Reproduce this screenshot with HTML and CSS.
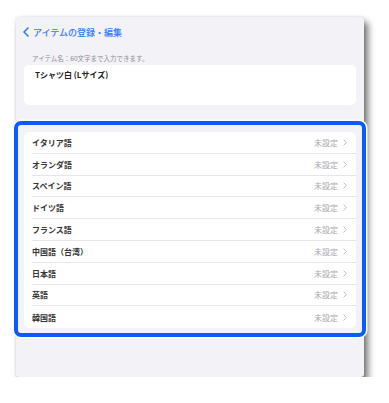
FILE: index.html
```html
<!DOCTYPE html>
<html lang="ja">
<head>
<meta charset="UTF-8">
<title>アイテムの登録・編集</title>
<link rel="stylesheet" href="styles.css">
</head>
<body>
	<div class="panel">
		<header class="nav">
			<svg class="back" width="6" height="10" viewBox="0 0 6 10"><polyline points="5,1 1,5 5,9" fill="none" stroke="#2f7cf6" stroke-width="1.6" stroke-linecap="round" stroke-linejoin="round"/></svg>
			<span>アイテムの登録・編集</span>
		</header>

		<p class="hint">アイテム名：60文字まで入力できます。</p>
		<div class="field">Tシャツ白 (Lサイズ)</div>

		<section class="langs">
			<ul class="list">
				<li><span class="name">イタリア語</span><span class="value">未設定</span><svg class="chev" width="4" height="7" viewBox="0 0 4 7"><polyline points="0.6,0.6 3.4,3.5 0.6,6.4" fill="none" stroke="#b8b8bd" stroke-width="0.9"/></svg></li>
				<li><span class="name">オランダ語</span><span class="value">未設定</span><svg class="chev" width="4" height="7" viewBox="0 0 4 7"><polyline points="0.6,0.6 3.4,3.5 0.6,6.4" fill="none" stroke="#b8b8bd" stroke-width="0.9"/></svg></li>
				<li><span class="name">スペイン語</span><span class="value">未設定</span><svg class="chev" width="4" height="7" viewBox="0 0 4 7"><polyline points="0.6,0.6 3.4,3.5 0.6,6.4" fill="none" stroke="#b8b8bd" stroke-width="0.9"/></svg></li>
				<li><span class="name">ドイツ語</span><span class="value">未設定</span><svg class="chev" width="4" height="7" viewBox="0 0 4 7"><polyline points="0.6,0.6 3.4,3.5 0.6,6.4" fill="none" stroke="#b8b8bd" stroke-width="0.9"/></svg></li>
				<li><span class="name">フランス語</span><span class="value">未設定</span><svg class="chev" width="4" height="7" viewBox="0 0 4 7"><polyline points="0.6,0.6 3.4,3.5 0.6,6.4" fill="none" stroke="#b8b8bd" stroke-width="0.9"/></svg></li>
				<li><span class="name">中国語（台湾）</span><span class="value">未設定</span><svg class="chev" width="4" height="7" viewBox="0 0 4 7"><polyline points="0.6,0.6 3.4,3.5 0.6,6.4" fill="none" stroke="#b8b8bd" stroke-width="0.9"/></svg></li>
				<li><span class="name">日本語</span><span class="value">未設定</span><svg class="chev" width="4" height="7" viewBox="0 0 4 7"><polyline points="0.6,0.6 3.4,3.5 0.6,6.4" fill="none" stroke="#b8b8bd" stroke-width="0.9"/></svg></li>
				<li><span class="name">英語</span><span class="value">未設定</span><svg class="chev" width="4" height="7" viewBox="0 0 4 7"><polyline points="0.6,0.6 3.4,3.5 0.6,6.4" fill="none" stroke="#b8b8bd" stroke-width="0.9"/></svg></li>
				<li><span class="name">韓国語</span><span class="value">未設定</span><svg class="chev" width="4" height="7" viewBox="0 0 4 7"><polyline points="0.6,0.6 3.4,3.5 0.6,6.4" fill="none" stroke="#b8b8bd" stroke-width="0.9"/></svg></li>
			</ul>
		</section>
	</div>
</body>
</html>
```

FILE: styles.css
```css
* {
	box-sizing: border-box;
}

body {
	margin: 0;
	padding: 17px 0 0 16px;
	background: #fff;
	font-family: "Noto Sans CJK JP", "Noto Sans", sans-serif;
}

.panel {
	width: 348px;
	height: 360px;
	background: #f2f2f7;
	border-radius: 3px;
	box-shadow: 4px 5px 7px rgba(0, 0, 0, 0.55), 0 0 3px rgba(0, 0, 0, 0.12);
	padding-top: 8px;
}

.nav {
	display: flex;
	align-items: center;
	height: 14px;
	padding-left: 7px;
	gap: 4px;
	color: #2f7cf6;
	font-size: 9px;
	font-weight: 500;
}

.hint {
	margin: 14px 0 0 16px;
	font-size: 6.5px;
	line-height: 10px;
	color: #8e8e93;
}

.field {
	margin: 2px 8px 0 8px;
	height: 40px;
	background: #fff;
	border-radius: 5px;
	padding: 4px 0 0 11px;
	font-size: 8px;
	font-weight: 700;
	color: #222;
}

.langs {
	margin: 16px -2px 0 -2px;
	border: 4px solid #0b5cff;
	border-radius: 7px;
	box-shadow: 0 0 0 1.5px #fff;
	background: #f2f2f7;
	padding: 7px 6px 5px 6px;
}

.list {
	list-style: none;
	margin: 0;
	padding: 0 0 0 8px;
	background: #fff;
	border-radius: 5px;
}

.list li {
	display: flex;
	align-items: center;
	height: 21.8px;
	padding-right: 9px;
	border-bottom: 1px solid #e6e6ea;
	font-size: 8px;
}

.list li:last-child {
	border-bottom: 0;
}

.name {
	flex: 1;
	color: #333;
	font-weight: 700;
}

.value {
	color: #a8a8ad;
	margin-right: 5px;
}
```
